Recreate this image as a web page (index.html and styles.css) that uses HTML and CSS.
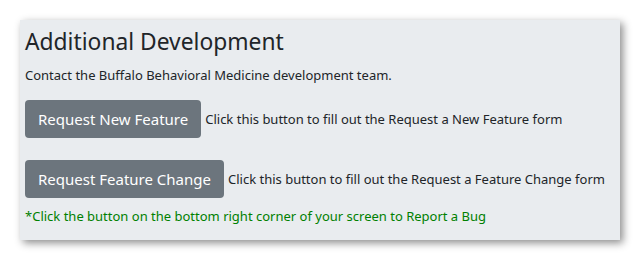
FILE: index.html
```html
<!DOCTYPE html>
<html lang="en">
<head>
    <meta charset="UTF-8">
    <meta name="viewport" content="width=device-width, initial-scale=1.0">
    <title>Additional Development</title>
    <link rel="stylesheet" href="styles.css">
</head>
<body>
    <div class="dev-panel">
        <h3 class="dev-title">Additional Development</h3>
        <p class="dev-intro">Contact the Buffalo Behavioral Medicine development team.</p>

        <div class="request-row">
            <button class="request-btn">Request New Feature</button>
            <span class="request-note">Click this button to fill out the Request a New Feature form</span>
        </div>

        <div class="request-row">
            <button class="request-btn">Request Feature Change</button>
            <span class="request-note">Click this button to fill out the Request a Feature Change form</span>
        </div>

        <p class="bug-note">*Click the button on the bottom right corner of your screen to Report a Bug</p>
    </div>
</body>
</html>
```

FILE: styles.css
```css
body {
    font-family: 'Noto Sans', 'Open Sans', sans-serif;
    margin: 0;
    padding: 20px;
    background: #ffffff;
    color: #212529;
}

.dev-panel {
    box-sizing: border-box;
    width: 600px;
    height: 220px;
    background: #e9ecef;
    padding: 8px 5px;
    box-shadow: 3px 3px 8px rgba(0,0,0,0.45);
}

.dev-title {
    font-size: 22.8px;
    font-weight: 400;
    line-height: 28px;
    margin: 0 0 9px 0;
}

.dev-intro {
    font-size: 13px;
    line-height: 20px;
    margin: 0 0 15px 0;
}

.request-row {
    display: flex;
    align-items: center;
    gap: 4px;
    margin-bottom: 22px;
}

.request-btn {
    flex-shrink: 0;
    white-space: nowrap;
    font-family: inherit;
    font-size: 15px;
    line-height: 24px;
    color: #ffffff;
    background: #6c757d;
    border: none;
    border-radius: 4px;
    padding: 7px 13px;
}

.request-note {
    font-size: 13px;
    white-space: nowrap;
}

.bug-note {
    font-size: 13px;
    line-height: 20px;
    color: #008000;
    margin: -14px 0 0 0;
}
```
